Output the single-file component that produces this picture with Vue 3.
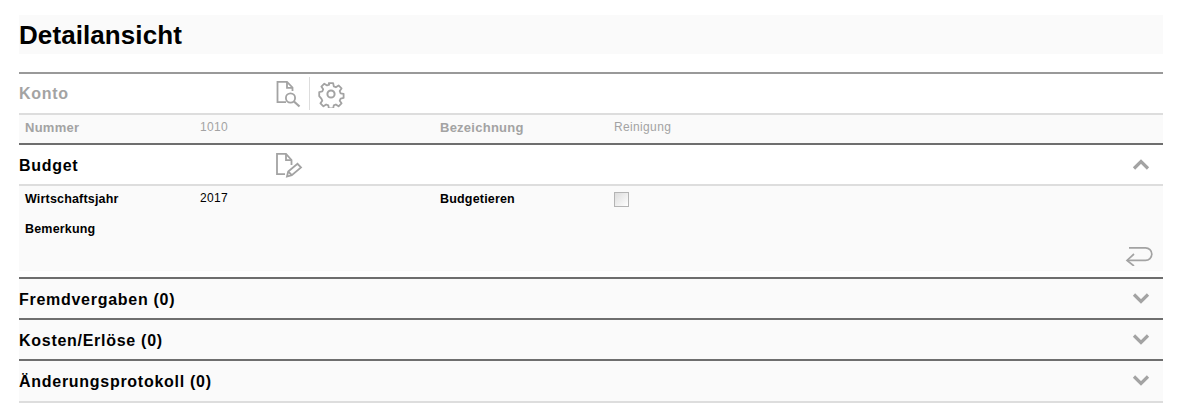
<template>
  <div class="page">
    <h1 class="title">Detailansicht</h1>

    <section class="sec sec-first">
      <div class="head head-white">
        <h2 class="name name-muted">Konto</h2>
        <div class="tools">
          <svg class="ico" width="26" height="28" viewBox="0 0 26 28" fill="none" stroke="#a3a3a3" stroke-width="1.8">
            <path d="M11 22.200H2.500V1.800H12L17.500 7.500V11" />
            <path d="M12 2V7.800H17.500" />
            <circle cx="15.500" cy="18" r="4.600" />
            <path d="M19 21.500L24.500 26.500" stroke-width="2.200" />
          </svg>
          <span class="sep"></span>
          <svg class="ico" width="28" height="28" viewBox="0 0 28 28" fill="none" stroke="#a3a3a3" stroke-width="2" stroke-linejoin="round">
            <circle cx="14" cy="14" r="3.600" />
            <path d="M11.600 2h4.800l.7 3.500 2.300 1 3-2 3.300 3.300-2 3 1 2.400 3.300.6v4.600l-3.300.7-1 2.300 2 3-3.300 3.300-3-2-2.300 1-.7 3.300h-4.800l-.6-3.300-2.400-1-3 2-3.300-3.300 2-3-1-2.300L.9 16.400v-4.600l3.400-.6 1-2.400-2-3 3.300-3.300 3 2 2.400-1z" transform="translate(1.400 1.400) scale(.9)" />
          </svg>
        </div>
      </div>
      <div class="row row-muted">
        <span class="lab">Nummer</span>
        <span class="val">1010</span>
        <span class="lab">Bezeichnung</span>
        <span class="val">Reinigung</span>
      </div>
    </section>

    <section class="sec">
      <div class="head head-white">
        <h2 class="name">Budget</h2>
        <div class="tools">
          <svg class="ico" width="28" height="26" viewBox="0 0 28 26" fill="none" stroke="#a3a3a3" stroke-width="1.800">
            <path d="M10 22.200H2V1.800H11L16.500 8V13" />
            <path d="M11 2V8.200H16.500" />
            <path d="M12 24.500L13.200 19.500L22.500 11.800L26 15.500L16.800 23.200Z" />
            <path d="M13.200 19.500L16.800 23.200" />
          </svg>
        </div>
        <svg class="chev" width="18" height="11" viewBox="0 0 18 11" fill="none" stroke="#a3a3a3" stroke-width="3.200">
          <path d="M2 9.500L9 2.500L16 9.500" />
        </svg>
      </div>
      <div class="body">
        <div class="row">
          <span class="lab">Wirtschaftsjahr</span>
          <span class="val">2017</span>
          <span class="lab">Budgetieren</span>
          <span class="val"><span class="box"></span></span>
        </div>
        <div class="row row-note">
          <span class="lab">Bemerkung</span>
        </div>
        <div class="actions">
          <svg width="28" height="20" viewBox="0 0 28 20" fill="none" stroke="#a3a3a3" stroke-width="1.700">
            <path d="M4 1.800H20.500A6.300 6.300 0 0 1 20.500 14.400H2" />
            <path d="M9 8L2 14.400L9 20" />
          </svg>
        </div>
      </div>
    </section>

    <section v-for="s in closed" :key="s" class="sec sec-closed">
      <div class="head">
        <h2 class="name">{{ s }}</h2>
        <svg class="chev" width="18" height="11" viewBox="0 0 18 11" fill="none" stroke="#a3a3a3" stroke-width="3.200">
          <path d="M2 1.500L9 8.500L16 1.500" />
        </svg>
      </div>
    </section>
    <div class="end"></div>
  </div>
</template>

<script setup>
const closed = ['Fremdvergaben (0)', 'Kosten/Erlöse (0)', 'Änderungsprotokoll (0)']
</script>

<style>
body { background: #fff; }
</style>

<style scoped>
.page {
  width: 1144px;
  margin-left: 19px;
  padding-top: 15px;
  font-family: "Liberation Sans", Arial, sans-serif;
  color: #000;
}
.title {
  margin: 0 0 18px;
  height: 39px;
  line-height: 40px;
  font-size: 26px;
  font-weight: 700;
  letter-spacing: .08px;
  background: #fafafa;
}
.sec { border-top: 2px solid #6e6e6e; }
.sec-first { border-top-color: #999; }
.sec-closed { background: #fafafa; }
.sec-closed:last-of-type { padding-bottom: 1px; }
.head {
  display: flex;
  align-items: center;
  height: 39px;
  background: #fafafa;
}
.head-white {
  background: #fff;
  border-bottom: 2px solid #ddd;
}
.name {
  width: 256px;
  margin: 0;
  padding-top: 2px;
  font-size: 16px;
  font-weight: 700;
  letter-spacing: .72px;
  line-height: 37px;
  white-space: nowrap;
}
.name-muted { padding-top: 0; color: #a3a3a3; }
.tools {
  display: flex;
  align-items: center;
  flex: 1;
}
.sep {
  width: 1px;
  height: 33px;
  margin: 0 7px 0 8px;
  background: #ddd;
}
.chev { margin-left: auto; margin-right: 13px; }
.row {
  display: grid;
  grid-template-columns: 175px 240px 174px 1fr;
  box-sizing: border-box;
  padding: 0 0 2px 6px;
  height: 28px;
  align-items: center;
  font-size: 12px;
}
.row-muted { background: #fafafa; color: #a3a3a3; }
.lab { font-size: 12.500px; font-weight: 700; letter-spacing: .18px; }
.row-muted .lab { margin-bottom: 2px; font-size: 13px; letter-spacing: .25px; }
.val { position: relative; top: -1px; letter-spacing: .35px; }
.body { background: #fafafa; height: 85px; margin-bottom: 6px; position: relative; }
.row-note { height: 32px; }
.actions {
  display: flex;
  justify-content: flex-end;
  padding-right: 10px;
}
.box {
  display: block;
  width: 15px;
  height: 15px;
  margin-top: 2px;
  box-sizing: border-box;
  border: 1px solid #b4b4b4;
  background: linear-gradient(135deg, #dcdcdc, #fff);
}
.end { border-top: 2px solid #ddd; }
</style>
